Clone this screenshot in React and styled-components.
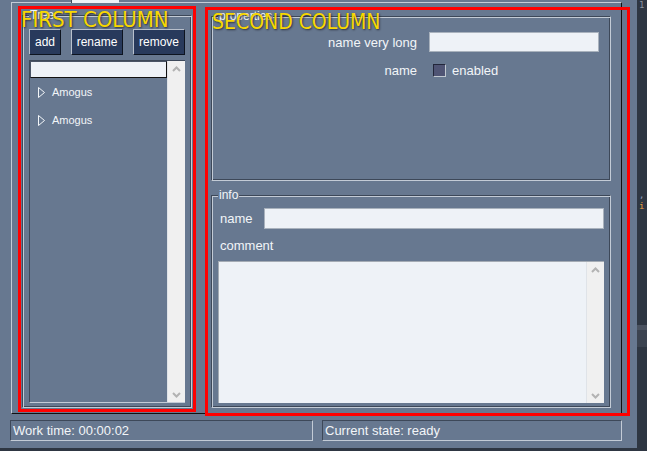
import * as React from 'react'
import styled, { createGlobalStyle } from 'styled-components'

const slate = '#677890'
const light = '#c3cbd6'
const dark = '#3d4859'
const field = '#eef2f7'
const text = '#f2f5f8'

const GlobalStyle = createGlobalStyle`
  html, body {
    margin: 0;
    padding: 0;
    background: #2e3642;
  }
  body {
    font-family: "Liberation Sans", Arial, sans-serif;
  }
`

const Screen = styled.div`
  position: relative;
  width: 647px;
  height: 451px;
  overflow: hidden;
  display: flex;
  background: #2e3642;
`

const Window = styled.div`
  width: 637px;
  height: 448px;
  background: ${slate};
  display: flex;
  flex-direction: column;
`

const TopStrip = styled.div`
  height: 2px;
  display: flex;
`

const TopTab = styled.div`
  margin-left: 71px;
  width: 47px;
  height: 3px;
  background: ${field};
  border-left: 1px solid ${dark};
  position: relative;
  z-index: 1;
`

const Frame = styled.div`
  margin-left: 11px;
  width: 611px;
  height: 412px;
  box-sizing: border-box;
  border-top: 1px solid ${light};
  border-left: 1px solid ${light};
  border-right: 1px solid #111;
  border-bottom: 1px solid #111;
  padding: 12px 0 0 10px;
  display: flex;
  gap: 19px;
`

const GroupBox = styled.div`
  position: relative;
  box-sizing: border-box;
  width: ${(p) => p.$width}px;
  height: ${(p) => p.$height}px;
  border: 1px solid;
  border-color: ${dark} ${light} ${light} ${dark};
  box-shadow: inset 1px 1px 0 ${light}, inset -1px -1px 0 ${dark};
  display: flex;
  flex-direction: column;
`

const Title = styled.span`
  position: absolute;
  top: -7px;
  left: 6px;
  padding: 0 1px;
  background: ${slate};
  color: ${text};
  font-size: 12px;
  line-height: 13px;
`

const TreeGroup = styled(GroupBox)`
  padding: 13px 6px 4px 6px;
  gap: 5px;
`

const ButtonRow = styled.div`
  display: flex;
  justify-content: space-between;
`

const Button = styled.button`
  height: 26px;
  padding: 0 5px;
  margin: 0;
  background: #283a5c;
  color: #fff;
  font-family: "Liberation Sans", Arial, sans-serif;
  font-size: 12px;
  border: 1px solid;
  border-color: #b8c0cc #0d1420 #0d1420 #b8c0cc;
  border-radius: 0;
`

const Tree = styled.div`
  flex: 1;
  display: flex;
  border-left: 1px solid ${dark};
  border-top: 1px solid ${dark};
  border-bottom: 1px solid ${light};
`

const TreeMain = styled.div`
  flex: 1;
  display: flex;
  flex-direction: column;
`

const Filter = styled.div`
  height: 17px;
  background: ${field};
  border: 1px solid;
  border-color: #4a5466 #111 #111 #4a5466;
  box-sizing: border-box;
`

const TreeItem = styled.div`
  height: 28px;
  display: flex;
  align-items: center;
  gap: 7px;
  padding-left: 8px;
  color: ${text};
  font-size: 11px;
`

const Scrollbar = styled.div`
  width: 17px;
  background: #f0f0f0;
  border-left: 1px solid #dfe3e8;
  display: flex;
  flex-direction: column;
  justify-content: space-between;
  align-items: center;
  padding: 5px 0 4px;
`

const Chevron = ({ down }) => (
  <svg width="9" height="6" viewBox="0 0 9 6">
    <polyline
      points={down ? '1,1 4.5,4.5 8,1' : '1,5 4.5,1.5 8,5'}
      fill="none"
      stroke="#b3b3b3"
      strokeWidth="2"
    />
  </svg>
)

const Arrow = () => (
  <svg width="7" height="11" viewBox="0 0 7 11">
    <polygon points="0.5,0.5 6.5,5.5 0.5,10.5" fill="none" stroke="#f2f5f8" strokeWidth="1" />
  </svg>
)

const RightCol = styled.div`
  margin-top: 1px;
  display: flex;
  flex-direction: column;
  gap: 14px;
`

const PropsGrid = styled(GroupBox)`
  display: grid;
  grid-template-columns: 1fr 170px;
  grid-auto-rows: 20px;
  align-content: start;
  column-gap: 12px;
  row-gap: 8px;
  padding: 15px 11px 0 0;
`

const Label = styled.span`
  color: ${text};
  font-size: 13px;
  display: flex;
  align-items: center;
  justify-content: ${(p) => (p.$right ? 'flex-end' : 'flex-start')};
`

const Input = styled.div`
  height: ${(p) => p.$h || 20}px;
  box-sizing: border-box;
  background: ${field};
  border: 1px solid #a9b2bd;
  flex: ${(p) => (p.$grow ? 1 : 'none')};
`

const CheckRow = styled.div`
  display: flex;
  align-items: center;
  gap: 6px;
  padding-left: 4px;
`

const Check = styled.span`
  width: 13px;
  height: 13px;
  box-sizing: border-box;
  background: #4f5474;
  border: 1px solid;
  border-color: #22263a #c0c8d0 #c0c8d0 #22263a;
`

const InfoBox = styled(GroupBox)`
  padding: 12px 6px 4px 6px;
`

const InfoRow = styled.div`
  display: flex;
  align-items: center;
  margin-top: ${(p) => p.$top || 0}px;
`

const InfoLabel = styled(Label)`
  width: 46px;
  padding-left: 2px;
  box-sizing: border-box;
  height: ${(p) => p.$h || 16}px;
`

const CommentBox = styled.div`
  flex: 1;
  margin-top: 8px;
  display: flex;
  background: ${field};
  border-top: 1px solid #a4abb4;
  border-left: 1px solid #a4abb4;
`

const CommentArea = styled.div`
  flex: 1;
`

const StatusBar = styled.div`
  margin-top: 6px;
  padding-left: 10px;
  display: flex;
  gap: 9px;
`

const StatusField = styled.div`
  width: ${(p) => p.$width}px;
  height: 21px;
  box-sizing: border-box;
  border: 1px solid;
  border-color: ${dark} ${light} ${light} ${dark};
  color: ${text};
  font-size: 13px;
  line-height: 19px;
  padding-left: 2px;
`

const SideStrip = styled.div`
  flex: 1;
  display: flex;
  flex-direction: column;
  align-items: flex-start;
  font-family: "DejaVu Sans Mono", monospace;
  font-size: 9px;
  line-height: 10px;
  padding-left: 2px;
`

const Code = styled.span`
  color: ${(p) => p.$color};
  margin-top: ${(p) => p.$top || 0}px;
  white-space: pre;
`

const SideBlock = styled.div`
  align-self: stretch;
  margin-left: -2px;
  margin-top: 114px;
  height: 17px;
  background: #3b4350;
  border-top: 5px solid #4a5260;
`

const RedBox = styled.div`
  position: absolute;
  left: ${(p) => p.$x}px;
  top: ${(p) => p.$y}px;
  width: ${(p) => p.$w}px;
  height: ${(p) => p.$h}px;
  box-sizing: border-box;
  border: 3px solid #ff0000;
  pointer-events: none;
`

const Note = styled.span`
  position: absolute;
  left: ${(p) => p.$x}px;
  top: ${(p) => p.$y}px;
  color: #f8d800;
  font-family: "DejaVu Sans Condensed", "DejaVu Sans", sans-serif;
  font-stretch: condensed;
  font-size: ${(p) => p.$size}px;
  line-height: 24px;
  text-shadow: 1px 1px 2px rgba(20, 20, 30, 0.7);
  white-space: nowrap;
`

export default function App() {
  return (
    <Screen>
      <GlobalStyle />
      <Window>
        <TopStrip>
          <TopTab />
        </TopStrip>
        <Frame>
          <TreeGroup $width={170} $height={393}>
            <Title>Tree</Title>
            <ButtonRow>
              <Button>add</Button>
              <Button>rename</Button>
              <Button>remove</Button>
            </ButtonRow>
            <Tree>
              <TreeMain>
                <Filter />
                <TreeItem>
                  <Arrow />
                  Amogus
                </TreeItem>
                <TreeItem>
                  <Arrow />
                  Amogus
                </TreeItem>
              </TreeMain>
              <Scrollbar>
                <Chevron />
                <Chevron down />
              </Scrollbar>
            </Tree>
          </TreeGroup>
          <RightCol>
            <PropsGrid $width={400} $height={165}>
              <Title>properties</Title>
              <Label $right>name very long</Label>
              <Input />
              <Label $right>name</Label>
              <CheckRow>
                <Check />
                <Label>enabled</Label>
              </CheckRow>
            </PropsGrid>
            <InfoBox $width={400} $height={213}>
              <Title>info</Title>
              <InfoRow>
                <InfoLabel $h={21}>name</InfoLabel>
                <Input $h={21} $grow />
              </InfoRow>
              <InfoRow $top={8}>
                <InfoLabel>comment</InfoLabel>
              </InfoRow>
              <CommentBox>
                <CommentArea />
                <Scrollbar>
                  <Chevron />
                  <Chevron down />
                </Scrollbar>
              </CommentBox>
            </InfoBox>
          </RightCol>
        </Frame>
        <StatusBar>
          <StatusField $width={303}>Work time: 00:00:02</StatusField>
          <StatusField $width={300}>Current state: ready</StatusField>
        </StatusBar>
      </Window>
      <SideStrip>
        <Code $color="#8a93a0">1</Code>
        <Code $color="#8fa0c0" $top={180}>,</Code>
        <Code $color="#e8a040" $top={1}>i</Code>
        <SideBlock />
      </SideStrip>
      <RedBox $x={18} $y={6} $w={178} $h={406} />
      <RedBox $x={205} $y={7} $w={425} $h={409} />
      <Note $x={21} $y={8} $size={22}>FIRST COLUMN</Note>
      <Note $x={212} $y={10} $size={21}>SECOND COLUMN</Note>
    </Screen>
  )
}
